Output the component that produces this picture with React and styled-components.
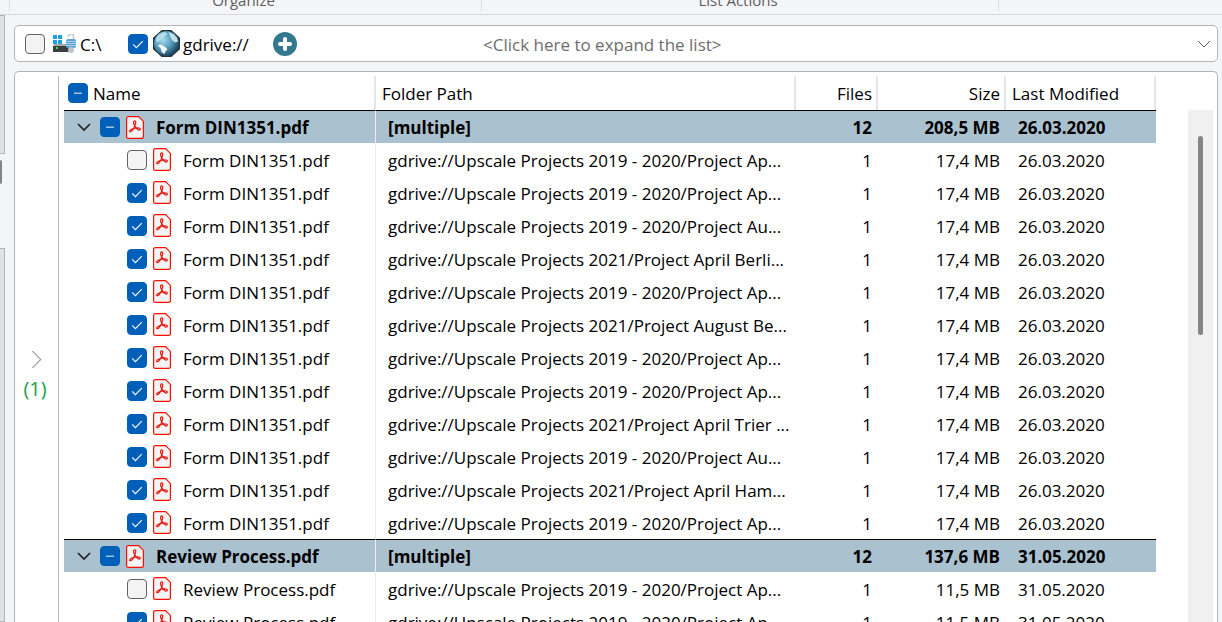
import React from "react";
import { useState } from "react";
import styled, { createGlobalStyle } from "styled-components";

const svgUrl = (d, color, width) =>
  `url("data:image/svg+xml,${encodeURIComponent(
    `<svg xmlns='http://www.w3.org/2000/svg' viewBox='0 0 20 20'><path d='${d}' fill='none' stroke='${color}' stroke-width='${width}'/></svg>`
  )}")`;
const CHECK = svgUrl("M5.2 10.4 L8.4 13.6 L14.8 7.2", "#ffffff", 1.1);
const DASH = svgUrl("M6 10.3 H14", "#9cc3e6", 1.5);

const formPaths = [
  "2019 - 2020/Project Ap...",
  "2019 - 2020/Project Ap...",
  "2019 - 2020/Project Au...",
  "2021/Project April Berli...",
  "2019 - 2020/Project Ap...",
  "2021/Project August Be...",
  "2019 - 2020/Project Ap...",
  "2019 - 2020/Project Ap...",
  "2021/Project April Trier ...",
  "2019 - 2020/Project Au...",
  "2021/Project April Ham...",
  "2019 - 2020/Project Ap...",
];

const groups = [
  {
    name: "Form DIN1351.pdf",
    files: 12,
    total: "208,5 MB",
    size: "17,4 MB",
    date: "26.03.2020",
    paths: formPaths,
  },
  {
    name: "Review Process.pdf",
    files: 12,
    total: "137,6 MB",
    size: "11,5 MB",
    date: "31.05.2020",
    paths: ["2019 - 2020/Project Ap...", "2019 - 2020/Project Ap..."],
  },
];

function PdfIcon() {
  return (
    <Icon width="18" height="23" viewBox="0 0 18 23" fill="none">
      <path
        d="M2.5 0.6 H12.6 L17.4 5.4 V20.5 Q17.4 22.4 15.5 22.4 H2.5 Q0.6 22.4 0.6 20.5 V2.5 Q0.6 0.6 2.5 0.6 Z"
        fill="#f4f4f5"
        stroke="#fa0f00"
        strokeWidth="1.2"
      />
      <path
        d="M8.8 4.9 C7.1 4.9 7.3 7.2 8.3 9 C9.3 11 11 13.2 12.6 13.9 C14.4 14.6 15.2 12.4 13 12 C10.8 11.6 7.2 12.3 5 13.6 C3.2 14.6 3.4 16 4.6 15.7 C6.2 15.3 8.2 11.7 9.1 8.9 C9.8 6.9 10.2 4.9 8.8 4.9 Z"
        stroke="#e8150c"
        strokeWidth="1.2"
      />
    </Icon>
  );
}

function DriveIcon() {
  return (
    <Icon width="24" height="20" viewBox="0 0 24 20">
      <path d="M0 1h4v4H0z M5 1h4v4H5z M0 6h4v4H0z M5 6h4v4H5z" fill="#1ba1e2" />
      <path d="M1 10H17L18 12H0Z" fill="#a9a9a9" />
      <rect y="12" width="18" height="6" fill="#3a3f42" />
      <rect x="3" y="13" width="2" height="2" fill="#35e02f" />
      <path d="M15.5 3V2.5a2.5 2.5 0 0 1 5 0V6" fill="none" stroke="#c3c9cf" strokeWidth="1.5" />
      <rect x="13" y="5" width="10" height="9" rx="2" fill="#5aa5d6" />
      <path d="M13 7.5h10M13 9.5h10M13 11.5h10" stroke="#a6cdea" strokeWidth="1" />
      <circle cx="18" cy="16" r="3" fill="#c0c4cf" />
    </Icon>
  );
}

function GlobeIcon() {
  return (
    <Icon width="27" height="27" viewBox="0 0 28 28">
      <defs>
        <radialGradient id="sea" cx="0.36" cy="0.36" r="0.7">
          <stop offset="0" stopColor="#a9dced" />
          <stop offset="0.5" stopColor="#559dbd" />
          <stop offset="1" stopColor="#163d55" />
        </radialGradient>
      </defs>
      <path d="M9 0H19L28 8V20L19 28H9L0 20V8Z" fill="#27343b" />
      <circle cx="14" cy="14" r="13" fill="url(#sea)" />
      <path d="M3 9 Q6 3 12 2 L15 4 L12 7 L10 9 L7 11 L4 13Z" fill="#b5dce8" />
      <path d="M16 2 L21 4 L25 8 L26 12 L23 13 L20 11 L18 7Z" fill="#c3dfe8" />
      <path d="M5 16 L8 15 L12 17 L15 20 L13 22 L12 25 L9 23 L8 19Z" fill="#f1f8fa" />
    </Icon>
  );
}

function PlusIcon() {
  return (
    <Icon width="24" height="24" viewBox="0 0 24 24">
      <circle cx="12" cy="12" r="12" fill="#34788f" />
      <path d="M12 7V17M7 12H17" stroke="#fff" strokeWidth="4" strokeLinecap="round" />
    </Icon>
  );
}

function Chevron({ size = 14, color, direction = "down", thin }) {
  const d = direction === "down" ? "M1 4 L7 10 L13 4" : "M5 0 L13 8 L5 16";
  return (
    <Icon width={size} height={size} viewBox={direction === "down" ? "0 0 14 14" : "0 0 16 16"}>
      <path d={d} fill="none" stroke={color} strokeWidth={thin ? 1 : 1.7} />
    </Icon>
  );
}

function Check({ state, label, id }) {
  const [checked, setChecked] = useState(state === "on");
  return (
    <CheckBox
      id={id}
      type="checkbox"
      aria-label={label}
      $mixed={state === "mixed"}
      checked={checked}
      onChange={(e) => setChecked(e.target.checked)}
    />
  );
}

function Group({ group }) {
  return (
    <tbody>
      <GroupRow>
        <td>
          <NameCell>
            <Toggle aria-label={`Collapse ${group.name}`}>
              <Chevron color="#222" />
            </Toggle>
            <Check state="mixed" label={group.name} />
            <PdfIcon />
            <FileName>{group.name}</FileName>
          </NameCell>
        </td>
        <td>[multiple]</td>
        <NumberCell>{group.files}</NumberCell>
        <NumberCell>{group.total}</NumberCell>
        <td>{group.date}</td>
      </GroupRow>
      {group.paths.map((path, i) => (
        <FileRow key={i}>
          <td>
            <NameCell $child>
              <Check state={i === 0 ? "off" : "on"} label={`${group.name} ${i + 1}`} />
              <PdfIcon />
              <FileName>{group.name}</FileName>
            </NameCell>
          </td>
          <td>gdrive://Upscale Projects {path}</td>
          <NumberCell>1</NumberCell>
          <NumberCell>{group.size}</NumberCell>
          <td>{group.date}</td>
        </FileRow>
      ))}
    </tbody>
  );
}

export default function App() {
  return (
    <Page>
      <GlobalStyle />
      <Ribbon>
        <RibbonGroup $width="10px" />
        <RibbonGroup $width="472px">Organize</RibbonGroup>
        <RibbonGroup $width="517px">List Actions</RibbonGroup>
      </Ribbon>
      <Workspace>
        <Edge>
          <EdgePane $height="139px" />
          <EdgeGap>
            <EdgeHandle />
          </EdgeGap>
          <EdgePane />
        </Edge>
        <Content>
          <PathBar>
            <Drives>
              <Check id="drive-c" state="off" />
              <DriveLabel htmlFor="drive-c">
                <DriveIcon />
                <BarText>C:\</BarText>
              </DriveLabel>
              <Check id="drive-g" state="on" />
              <DriveLabel htmlFor="drive-g" $tight>
                <GlobeIcon />
                <BarText>gdrive://</BarText>
              </DriveLabel>
              <AddButton aria-label="Add path">
                <PlusIcon />
              </AddButton>
            </Drives>
            <ExpandButton>
              <BarText>&lt;Click here to expand the list&gt;</BarText>
              <Chevron color="#555" thin />
            </ExpandButton>
          </PathBar>
          <Panel>
            <Side>
              <Chevron size={17} color="#a0a0a0" direction="right" thin />
              <span>(1)</span>
            </Side>
            <TableArea>
              <FileTable>
                <colgroup>
                  <Col $width="312px" />
                  <col />
                  <Col $width="82px" />
                  <Col $width="128px" />
                  <Col $width="150px" />
                </colgroup>
                <thead>
                  <tr>
                    <HeadCell>
                      <HeadName>
                        <Check state="mixed" label="Select all" />
                        <BarText>Name</BarText>
                      </HeadName>
                    </HeadCell>
                    <HeadCell>Folder Path</HeadCell>
                    <HeadCell $right>Files</HeadCell>
                    <HeadCell $right>Size</HeadCell>
                    <HeadCell>Last Modified</HeadCell>
                  </tr>
                </thead>
                {groups.map((group) => (
                  <Group key={group.name} group={group} />
                ))}
              </FileTable>
            </TableArea>
            <ScrollTrack>
              <ScrollThumb />
            </ScrollTrack>
          </Panel>
        </Content>
      </Workspace>
    </Page>
  );
}

const GlobalStyle = createGlobalStyle`
  * {
    box-sizing: border-box;
  }
  body {
    margin: 0;
    overflow: hidden;
    color: #000;
    font-family: "Open Sans", sans-serif;
    font-size: 17px;
    line-height: 24px;
  }
  button {
    padding: 0;
    border: none;
    background: none;
    font: inherit;
    cursor: pointer;
  }
`;

const Icon = styled.svg`
  display: block;
  flex: none;
`;

const Page = styled.div`
  display: flex;
  flex-direction: column;
  height: 100vh;
  background: #f4f5f8;
`;

const Ribbon = styled.div`
  display: flex;
  flex: none;
  height: 15px;
  padding-bottom: 3px;
  border-bottom: 1px solid #d6d6d9;
`;

const RibbonGroup = styled.div`
  display: flex;
  align-items: flex-end;
  justify-content: center;
  width: ${(props) => props.$width};
  padding-right: 4px;
  border-right: 1px solid #dcdde0;
  color: #5f5f5f;
  font-size: 15px;
  line-height: 22px;
`;

const Workspace = styled.div`
  display: flex;
  flex: 1;
  min-height: 0;
`;

const Edge = styled.div`
  display: flex;
  flex-direction: column;
  width: 5px;
`;

const EdgePane = styled.div`
  flex: ${(props) => (props.$height ? "none" : 1)};
  height: ${(props) => props.$height};
  border: 1px solid #b4b4b4;
  border-left: none;
  background: #e2e2e2;
`;

const EdgeGap = styled.div`
  flex: none;
  height: 94px;
  padding-top: 6px;
`;

const EdgeHandle = styled.div`
  width: 2px;
  height: 24px;
  border-radius: 0 2px 2px 0;
  background: #858585;
`;

const Content = styled.div`
  display: flex;
  flex: 1;
  flex-direction: column;
  gap: 9px;
  min-width: 0;
  padding: 10px 4px 0 9px;
`;

const PathBar = styled.div`
  display: flex;
  flex: none;
  align-items: center;
  height: 37px;
  padding: 0 6px 0 10px;
  border: 1px solid #b4b4b4;
  border-radius: 5px;
  background: #fff;
`;

const Drives = styled.div`
  display: flex;
  align-items: center;
  width: 458px;
`;

const DriveLabel = styled.label`
  display: flex;
  align-items: center;
  gap: 3px;
  width: ${(props) => (props.$tight ? "120px" : "75px")};
  margin-left: ${(props) => (props.$tight ? "5px" : "8px")};
`;

const BarText = styled.span`
  padding-top: 2px;
`;

const AddButton = styled.button`
  width: 24px;
  height: 24px;
`;

const ExpandButton = styled.button`
  display: flex;
  flex: 1;
  align-items: center;
  justify-content: space-between;
  height: 100%;
  color: #6d6d6d;
`;

const Panel = styled.div`
  display: flex;
  flex: 1;
  min-height: 0;
  padding: 4px 4px 0 0;
  border: 1px solid #b4b4b4;
  border-bottom: none;
  border-radius: 5px 5px 0 0;
  background: #fff;
`;

const Side = styled.div`
  display: flex;
  flex: none;
  flex-direction: column;
  align-items: center;
  gap: 9px;
  width: 44px;
  padding: 275px 3px 0 0;
  border-right: 1px solid #b9b9b9;
  color: #22a046;
  font-size: 20px;
`;

const TableArea = styled.div`
  flex: 1;
  min-width: 0;
  margin: 0 32px 0 5px;
  overflow: hidden;
`;

const FileTable = styled.table`
  width: 100%;
  border-collapse: separate;
  border-spacing: 0;
  table-layout: fixed;
  td,
  th {
    padding: 2px 6px 0 12px;
    overflow: hidden;
    white-space: nowrap;
  }
  td:first-child,
  th:first-child {
    padding: 0 0 0 4px;
  }
  td:first-child {
    border-right: 1px solid #ececec;
  }
`;

const Col = styled.col`
  width: ${(props) => props.$width};
`;

const HeadCell = styled.th`
  height: 34px;
  border-right: 2px solid #e6e6e6;
  font-weight: 400;
  text-align: ${(props) => (props.$right ? "right" : "left")};
  && {
    padding-right: 4px;
    padding-left: 6px;
  }
  &&:first-child {
    padding-left: 4px;
  }
`;

const HeadName = styled.div`
  display: flex;
  align-items: center;
  gap: 5px;
`;

const FileRow = styled.tr`
  height: 33px;
`;

const GroupRow = styled.tr`
  height: 33px;
  background: #aac1cf;
  font-weight: 700;
  td {
    border-top: 1px solid #000;
  }
`;

const NameCell = styled.div`
  display: flex;
  align-items: center;
  gap: 6px;
  height: 26px;
  padding-left: ${(props) => (props.$child ? "59px" : "9px")};
`;

const FileName = styled.span`
  padding: 2px 0 0 6px;
`;

const NumberCell = styled.td`
  text-align: right;
`;

const Toggle = styled.button`
  display: flex;
  align-items: center;
  width: 17px;
  height: 20px;
`;

const CheckBox = styled.input`
  flex: none;
  appearance: none;
  width: 20px;
  height: 20px;
  margin: 0;
  border: 1px solid #626262;
  border-radius: 4px;
  background: ${(props) => (props.$mixed ? DASH : "none")} center / 20px 20px
    ${(props) => (props.$mixed ? "#005fb8" : "#f3f3f3")};
  border-color: ${(props) => (props.$mixed ? "#005fb8" : "#626262")};
  &:checked {
    border-color: #005fb8;
    background: ${CHECK} center / 20px 20px #005fb8;
  }
`;

const ScrollTrack = styled.div`
  flex: none;
  width: 25px;
  margin-top: 34px;
  padding: 26px 10px 0;
  background: #f0f0f0;
`;

const ScrollThumb = styled.div`
  width: 5px;
  height: 199px;
  border-radius: 3px;
  background: #858585;
`;
